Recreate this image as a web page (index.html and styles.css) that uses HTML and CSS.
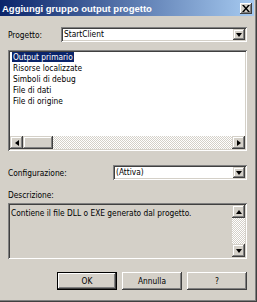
FILE: index.html
```html
<!DOCTYPE html>
<html lang="it">
<head>
    <meta charset="UTF-8" />
    <title>Aggiungi gruppo output progetto</title>
    <link rel="stylesheet" href="styles.css">
</head>
<body>
<div class="window">
    <div class="titlebar">
        <span class="title">Aggiungi gruppo output progetto</span>
        <span class="close raised">
            <svg width="8" height="7" viewBox="0 0 8 7"><path d="M0 0h2l2 2.4L6 0h2L5 3.5 8 7H6L4 4.6 2 7H0l3-3.5z" fill="#000"/></svg>
        </span>
    </div>

    <div class="content">
        <!-- progetto -->
        <div class="row row-project">
            <span class="lbl lbl-project">Progetto:</span>
            <div class="combo sunken">
                <span class="combo-text">StartClient</span>
                <span class="drop btn-face"><i class="arrow-down"></i></span>
            </div>
        </div>

        <!-- gruppi di output -->
        <div class="listbox sunken">
            <ul class="items">
                <li><span class="sel">Output primario</span></li>
                <li><span>Risorse localizzate</span></li>
                <li><span>Simboli di debug</span></li>
                <li><span>File di dati</span></li>
                <li><span>File di origine</span></li>
            </ul>
            <div class="hscroll">
                <span class="sbtn btn-face"><i class="arrow-left"></i></span>
                <span class="hthumb btn-face"></span>
                <span class="track"></span>
                <span class="sbtn btn-face"><i class="arrow-right"></i></span>
            </div>
        </div>

        <!-- configurazione -->
        <div class="row row-config">
            <span class="lbl lbl-config">Configurazione:</span>
            <div class="combo sunken">
                <span class="combo-text">(Attiva)</span>
                <span class="drop btn-face"><i class="arrow-down"></i></span>
            </div>
        </div>

        <div class="lbl lbl-desc">Descrizione:</div>
        <div class="desc sunken">
            <div class="desc-text">Contiene il file DLL o EXE generato dal progetto.</div>
            <div class="vscroll">
                <span class="sbtn btn-face"><i class="arrow-up"></i></span>
                <span class="track"></span>
                <span class="sbtn btn-face"><i class="arrow-down"></i></span>
            </div>
        </div>

        <div class="buttons">
            <button class="btn btn-default">OK</button>
            <button class="btn">Annulla</button>
            <button class="btn">?</button>
        </div>
    </div>
</div>
</body>
</html>
```

FILE: styles.css
```css
body {
    margin: 0;
    background: #d4d0c8;
    font-family: "DejaVu Sans Condensed", "Liberation Sans", sans-serif;
    font-size: 8.3px;
    color: #000;
}
.window {
    width: 257px;
    height: 302px;
    box-sizing: border-box;
    padding: 0 3px 3px 0;
    box-shadow: inset -1px -1px #404040, inset -2px -2px #808080;
    overflow: hidden;
}
.titlebar {
    height: 16px;
    display: flex;
    align-items: center;
    justify-content: space-between;
    padding-left: 2px;
    background: linear-gradient(to right, #0a246a, #a6caf0);
}
.title {
    color: #fff;
    font-family: "Liberation Sans", sans-serif;
    font-weight: bold;
    font-size: 9.5px;
}
.close {
    width: 12px;
    height: 11px;
    margin-right: 2px;
    display: flex;
    align-items: center;
    justify-content: center;
    box-sizing: border-box;
    background: #d4d0c8;
}
.content {
    padding: 0 7px 0 8px;
}

/* bordi 3D stile classico */
.sunken {
    box-sizing: border-box;
    padding: 2px;
    box-shadow: inset 1px 1px #808080, inset -1px -1px #fff, inset 2px 2px #404040, inset -2px -2px #d4d0c8;
}
.raised {
    box-shadow: inset -1px -1px #404040, inset 1px 1px #fff, inset -2px -2px #808080, inset 2px 2px #d4d0c8;
    background-color: #d4d0c8;
}
.btn-face {
    box-shadow: inset -1px -1px #404040, inset 1px 1px #d4d0c8, inset -2px -2px #808080, inset 2px 2px #fff;
    background-color: #d4d0c8;
}

.row {
    display: flex;
    align-items: center;
}
.row-project {
    margin-top: 11px;
}
.row-config {
    margin-top: 14px;
}
.lbl-project {
    width: 53px;
}
.lbl-config {
    width: 105px;
}
.lbl-desc {
    margin-top: 10px;
    line-height: 11px;
}
.combo {
    flex: 1;
    height: 15px;
    display: flex;
    align-items: stretch;
    background: #fff;
}
.combo-text {
    flex: 1;
    padding-left: 1px;
    line-height: 11px;
}
.drop {
    width: 12px;
    display: flex;
    align-items: center;
    justify-content: center;
}

/* frecce */
.arrow-down, .arrow-up, .arrow-left, .arrow-right {
    display: block;
    width: 0;
    height: 0;
}
.arrow-down {
    border-left: 3px solid transparent;
    border-right: 3px solid transparent;
    border-top: 4px solid #000;
}
.arrow-up {
    border-left: 3px solid transparent;
    border-right: 3px solid transparent;
    border-bottom: 4px solid #000;
}
.arrow-left {
    border-top: 3px solid transparent;
    border-bottom: 3px solid transparent;
    border-right: 4px solid #000;
}
.arrow-right {
    border-top: 3px solid transparent;
    border-bottom: 3px solid transparent;
    border-left: 4px solid #000;
}

.listbox {
    margin-top: 8px;
    height: 101px;
    display: flex;
    flex-direction: column;
    background: #fff;
}
.items {
    flex: 1;
    list-style: none;
    margin: 0;
    padding: 0 0 0 2px;
}
.items li {
    line-height: 11px;
    height: 11px;
}
.items span {
    padding: 0 1px;
}
.sel {
    background: #0a246a;
    color: #fff;
}
.track {
    flex: 1;
    background-color: #fff;
    background-image: conic-gradient(#d4d0c8 25%, #fff 0 50%, #d4d0c8 0 75%, #fff 0);
    background-size: 2px 2px;
}
.hscroll {
    height: 13px;
    display: flex;
}
.sbtn {
    width: 13px;
    height: 13px;
    display: flex;
    align-items: center;
    justify-content: center;
}
.hthumb {
    width: 30px;
}

.desc {
    margin-top: 2px;
    height: 56px;
    display: flex;
}
.desc-text {
    flex: 1;
    padding: 3px 0 0 1px;
    line-height: 11px;
}
.vscroll {
    width: 13px;
    display: flex;
    flex-direction: column;
}

.buttons {
    margin-top: 13px;
    display: flex;
    justify-content: flex-end;
    gap: 5px;
}
.btn {
    width: 60px;
    height: 18px;
    padding: 0;
    border: none;
    font: inherit;
    color: #000;
    box-shadow: inset -1px -1px #404040, inset 1px 1px #fff, inset -2px -2px #808080, inset 2px 2px #d4d0c8;
    background: #d4d0c8;
}
.btn-default {
    box-shadow: inset 0 0 0 1px #000, inset -2px -2px #404040, inset 2px 2px #fff, inset -3px -3px #808080;
}
```
